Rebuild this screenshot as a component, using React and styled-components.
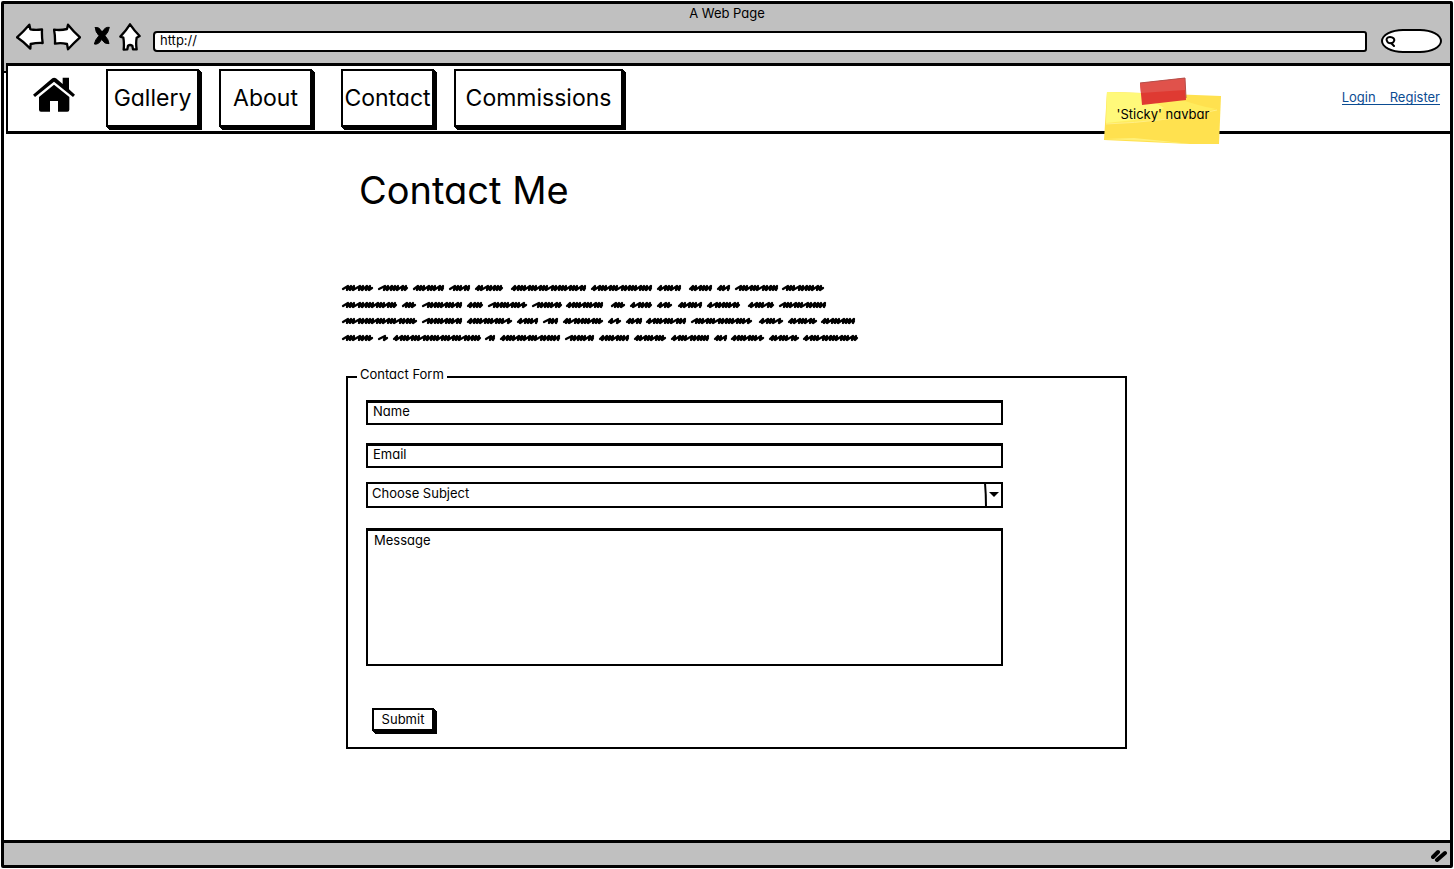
import React from "react";
import styled, { createGlobalStyle } from "styled-components";

const GlobalStyle = createGlobalStyle`
  *, *::before, *::after { box-sizing: border-box; }
  body {
    margin: 0;
    background: #fff;
    color: #000;
    font-family: Inter, "Liberation Sans", sans-serif;
    font-feature-settings: "cv11" 1;
    font-size: 13px;
    line-height: 16px;
  }
  button, input, select, textarea {
    font: inherit;
    font-feature-settings: inherit;
    color: inherit;
    margin: 0;
    border-radius: 0;
    outline: none;
  }
`;

const Page = styled.div`
  min-height: 100vh;
  padding: 1px;
  display: flex;
`;

const Frame = styled.div`
  flex: 1;
  min-width: 0;
  display: flex;
  flex-direction: column;
  border: 3px solid #000;
  border-radius: 2px;
`;

const BrowserBar = styled.header`
  background: #c0c0c0;
  padding-bottom: 5px;
`;

const WindowTitle = styled.div`
  height: 20px;
  line-height: 18px;
  text-align: center;
`;

const Toolbar = styled.div`
  height: 34px;
  display: flex;
  align-items: center;
  padding: 0 8px 0 12px;
`;

const ToolGroup = styled.div`
  display: flex;
  gap: 9px;
  padding-bottom: 8px;
`;

const ToolButton = styled.button`
  display: block;
  padding: 0;
  border: 0;
  background: none;
  svg {
    display: block;
    height: 28px;
    fill: #fff;
    stroke: #000;
    stroke-width: 7;
    stroke-linejoin: round;
    stroke-linecap: round;
  }
`;

const UrlInput = styled.input`
  flex: 1;
  min-width: 0;
  height: 21px;
  margin: 0 14px 0 12px;
  padding: 0 5px 2px;
  border: 2px solid #000;
  border-radius: 4px 3px 3px 4px;
  background: #fff;
`;

const SearchBox = styled.label`
  display: flex;
  align-items: center;
  width: 61px;
  height: 24px;
  padding: 0 2px;
  border: 2px solid #000;
  border-radius: 22px / 12px;
  background: #fff;
  svg { flex: none; }
`;

const SearchInput = styled.input`
  flex: 1;
  min-width: 0;
  border: 0;
  padding: 0;
  background: none;
`;

const NavShell = styled.div`
  padding-left: 2px;
  background: linear-gradient(#c0c0c0 8px, #000 8px, #000 10px, #fff 10px);
`;

const NavBar = styled.nav`
  position: relative;
  height: 71px;
  display: flex;
  align-items: center;
  padding: 0 10px 2px 25px;
  background: #fff;
  border: solid #000;
  border-width: 3px 0 3px 2px;
`;

const HomeLink = styled.a`
  display: block;
  margin: 0 31px 6px 0;
  svg { display: block; }
`;

const NavGroup = styled.div`
  display: flex;
  gap: 20px;
  margin-right: ${(p) => (p.$last ? "auto" : "29px")};
`;

const BoxButton = styled.button`
  display: flex;
  align-items: center;
  justify-content: center;
  white-space: nowrap;
  padding: 0 0 2px;
  background: #fff;
  border: 2px solid #000;
  box-shadow: 1px 1px 0 #000, 2px 2px 0 #000, 3px 3px 0 #000;
`;

const NavButton = styled(BoxButton)`
  width: ${(p) => (p.$wide ? "169px" : "93px")};
  height: 58px;
  padding: 0;
  font-size: 23px;
  line-height: 28px;
`;

const StickyNote = styled.div`
  position: absolute;
  top: 10px;
  right: 228px;
  width: 118px;
  height: 70px;
  svg { position: absolute; inset: 0; }
  span {
    position: absolute;
    top: 30px;
    left: 0;
    width: 100%;
    text-align: center;
    white-space: nowrap;
  }
`;

const Account = styled.div`
  display: flex;
  gap: 14px;
  border-bottom: 1px solid #0b4c92;
  line-height: 14px;
  a { color: #0b4c92; text-decoration: none; }
`;

const Main = styled.main`
  flex: 1;
  display: grid;
  grid-template-columns: 342fr 781fr 323fr;
  padding: 36px 0;
`;

const Column = styled.div`
  grid-column: 2;
  min-width: 0;
`;

const Title = styled.h1`
  margin: 0 0 70px 13px;
  font-size: 38px;
  line-height: 40px;
  font-weight: 400;
`;

const Scribbles = styled.svg`
  display: block;
  margin: 0 0 20px -6px;
`;

const FormBox = styled.fieldset`
  margin: 0;
  min-width: 0;
  padding: 12px 122px 16px 18px;
  border: 2px solid #000;
  legend {
    margin-left: -9px;
    padding: 0 3px 6px;
  }
`;

const Fields = styled.div`
  display: flex;
  flex-direction: column;
`;

const fieldBox = `
  display: block;
  width: 100%;
  border: solid #000;
  border-width: 3px 2px 2px;
  background: #fff;
  &::placeholder { color: #000; opacity: 1; }
`;

const TextInput = styled.input`
  ${fieldBox}
  height: 25px;
  margin-bottom: ${(p) => (p.$tight ? "14px" : "18px")};
  padding: 0 5px 4px;
`;

const SelectWrap = styled.div`
  position: relative;
  margin-bottom: 20px;
  svg {
    position: absolute;
    top: 0;
    right: 0;
    pointer-events: none;
  }
`;

const Select = styled.select`
  display: block;
  appearance: none;
  width: 100%;
  height: 26px;
  padding: 0 24px 4px 4px;
  border: 2px solid #000;
  background: #fff;
`;

const TextArea = styled.textarea`
  ${fieldBox}
  height: 138px;
  resize: none;
  padding: 1px 6px;
`;

const SubmitButton = styled(BoxButton)`
  width: 62px;
  height: 23px;
  margin: 42px 0 0 6px;
`;

const StatusBar = styled.footer`
  height: 25px;
  display: flex;
  justify-content: flex-end;
  align-items: flex-end;
  padding: 0 3px 2px 0;
  border-top: 3px solid #000;
  background: #c0c0c0;
`;

/* Start and end of every scribbled word, line by line. */
const LINES = [
  { y: 8, words: [[342, 373], [378, 408], [413, 444], [449, 470], [475, 503], [511, 586], [591, 652], [657, 681], [689, 712], [717, 730], [735, 778], [782, 824]] },
  { y: 25, words: [[342, 397], [402, 416], [422, 462], [467, 483], [488, 527], [532, 562], [566, 603], [611, 625], [630, 652], [657, 672], [678, 702], [707, 740], [748, 774], [779, 826]] },
  { y: 41, words: [[342, 417], [422, 462], [467, 512], [517, 538], [543, 558], [563, 603], [608, 621], [626, 642], [646, 686], [691, 752], [759, 783], [788, 817], [821, 855]] },
  { y: 58, words: [[342, 373], [378, 388], [393, 481], [485, 495], [500, 560], [565, 594], [599, 629], [634, 666], [671, 709], [714, 727], [731, 764], [769, 799], [803, 858]] },
];

const STEPS = [3, 5, 3, 3, 6, 3, 4, 3, 3, 5, 3];

function scribble(start, end, y) {
  let x = start - 340;
  const stop = end - 340;
  let i = start % 11;
  let d = `M${x + 1} ${y + 1}`;
  while (x + 4 < stop) {
    const step = STEPS[i % 11];
    const top = Math.min(x + step + 1, stop - 1);
    d += `L${top} ${y - 2}L${top - 1} ${y + 2}`;
    x += step;
    i += 1;
  }
  return d + `L${stop - 1} ${y}`;
}

function Paragraph() {
  return (
    <Scribbles width="520" height="66" viewBox="0 0 520 66" fill="none" stroke="#000" strokeWidth="2.3" strokeLinejoin="round" strokeLinecap="round" aria-hidden="true">
      {LINES.map((line) =>
        line.words.map(([a, b]) => <path key={`${line.y}-${a}`} d={scribble(a, b, line.y)} />)
      )}
    </Scribbles>
  );
}

export default function App() {
  return (
    <Page>
      <GlobalStyle />
      <Frame>
        <BrowserBar>
          <WindowTitle>A Web Page</WindowTitle>
          <Toolbar>
            <ToolGroup>
              <ToolButton aria-label="Back">
                <svg width="28" viewBox="48 69 84 84">
                  <path d="M51 112Q70 95 88 74L91 88Q108 91 126 88Q125 108 128 129Q110 128 92 132L91 146Q72 126 51 112Z" />
                </svg>
              </ToolButton>
              <ToolButton aria-label="Forward">
                <svg width="28" viewBox="159 69 84 84">
                  <path d="M162 89Q182 92 201 87L204 74Q221 95 240 112Q222 128 204 148L201 132Q182 127 165 131Q166 108 162 89Z" />
                </svg>
              </ToolButton>
              <ToolButton aria-label="Stop">
                <svg width="20" viewBox="270 69 60 84">
                  <path d="M286 83Q298 79 306 97Q315 80 328 82Q325 98 315 107Q326 119 327 131Q313 133 305 118Q296 135 283 132Q285 120 297 107Q286 96 286 83Z" fill="#000" strokeWidth="3" />
                </svg>
              </ToolButton>
              <ToolButton aria-label="Home">
                <svg width="22" viewBox="357 69 66 84">
                  <path d="M390 73Q403 92 419 108L410 113Q407 130 410 148L399 148L397 137Q390 133 384 137L382 148L371 149Q373 130 370 113L361 110Q378 92 390 73Z" />
                </svg>
              </ToolButton>
            </ToolGroup>
            <UrlInput aria-label="Address" defaultValue="http://" />
            <SearchBox aria-label="Search">
              <svg width="11" height="12" viewBox="0 0 11 12" fill="none" stroke="#000" strokeWidth="2" strokeLinecap="round">
                <path d="M5 2C2 2 1 4 2 6C3 9 8 9 9 6C10 4 8 2 5 2M6 8L9 11" />
              </svg>
              <SearchInput aria-label="Search" />
            </SearchBox>
          </Toolbar>
        </BrowserBar>

        <NavShell>
          <NavBar>
            <HomeLink href="#home" aria-label="Home">
              <svg width="42" height="35" viewBox="99 232 126 105">
                <path d="M99 285L157 236Q162 232 168 236L188 253V234H207V269L225 285L219 292L162 246L105 292Z" />
                <path d="M162 255L208 292V330Q208 336 202 336H174V304H150V336H123Q117 336 117 330V292Z" />
              </svg>
            </HomeLink>
            <NavGroup>
              <NavButton>Gallery</NavButton>
              <NavButton>About</NavButton>
            </NavGroup>
            <NavGroup $last>
              <NavButton>Contact</NavButton>
              <NavButton $wide>Commissions</NavButton>
            </NavGroup>
            <Account>
              <a href="#login">Login</a>
              <a href="#register">Register</a>
            </Account>
            <StickyNote>
              <svg width="118" height="70" viewBox="0 0 118 70" aria-hidden="true">
                <path d="M3 16L40 17L117 20L115 68L86 68L0 64Z" fill="#ffe14f" />
                <path d="M3 16L60 18Q94 30 112 33Q60 46 2 48Z" fill="#ffec5e" />
                <path d="M3 16L36 17L60 32L30 44L2 47Z" fill="#fff97a" />
                <path d="M2 48Q60 46 113 34" fill="none" stroke="#ffef86" />
                <path d="M0 63L45 65L86 68L60 65L30 62Z" fill="#fff07a" />
                <path d="M36 7L81 2L82 24L38 29Z" fill="#df3a32" />
                <path d="M36 7L81 2L81 14L37 17Z" fill="#e0524b" />
                <path d="M36 7L81 2L82 22" fill="none" stroke="#b6504b" />
              </svg>
              <span>'Sticky' navbar</span>
            </StickyNote>
          </NavBar>
        </NavShell>

        <Main>
          <Column>
            <Title>Contact Me</Title>
            <Paragraph />
            <FormBox>
              <legend>Contact Form</legend>
              <Fields>
                <TextInput aria-label="Name" placeholder="Name" />
                <TextInput aria-label="Email" placeholder="Email" $tight />
                <SelectWrap>
                  <Select aria-label="Choose Subject">
                    <option>Choose Subject</option>
                  </Select>
                  <svg width="19" height="26" viewBox="0 0 19 26" aria-hidden="true">
                    <path d="M1 1Q2 12 2 25" fill="none" stroke="#000" strokeWidth="2" />
                    <path d="M5 10H15L10 15Z" />
                  </svg>
                </SelectWrap>
                <TextArea aria-label="Message" placeholder="Message" />
              </Fields>
              <SubmitButton type="button">Submit</SubmitButton>
            </FormBox>
          </Column>
        </Main>

        <StatusBar>
          <svg width="16" height="14" viewBox="0 0 16 14" stroke="#000" strokeWidth="4" strokeLinecap="round" aria-hidden="true">
            <path d="M2 8L7 3M6 11L14 4" />
          </svg>
        </StatusBar>
      </Frame>
    </Page>
  );
}
